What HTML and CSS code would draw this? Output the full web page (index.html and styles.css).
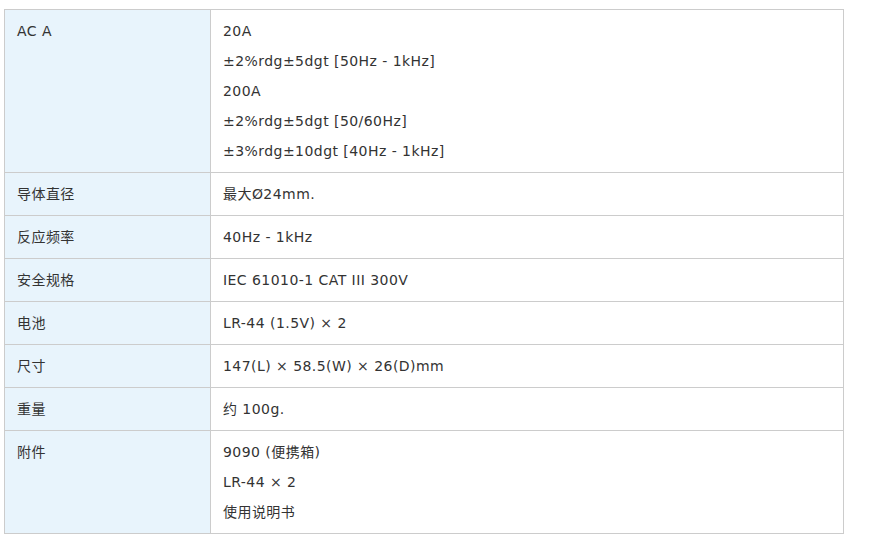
FILE: index.html
```html
<!DOCTYPE html>
<html lang="zh">
<head>
<meta charset="utf-8">
<link rel="stylesheet" href="styles.css">
</head>
<body>
<table class="spec">
  <tr><th>AC A</th><td><p>20A</p><p>±2%rdg±5dgt [50Hz - 1kHz]</p><p>200A</p><p>±2%rdg±5dgt [50/60Hz]</p><p>±3%rdg±10dgt [40Hz - 1kHz]</p></td></tr>
  <tr><th>导体直径</th><td><p>最大Ø24mm.</p></td></tr>
  <tr><th>反应频率</th><td><p>40Hz - 1kHz</p></td></tr>
  <tr><th>安全规格</th><td><p>IEC 61010-1 CAT III 300V</p></td></tr>
  <tr><th>电池</th><td><p>LR-44 (1.5V) × 2</p></td></tr>
  <tr><th>尺寸</th><td><p>147(L) × 58.5(W) × 26(D)mm</p></td></tr>
  <tr><th>重量</th><td><p>约 100g.</p></td></tr>
  <tr><th>附件</th><td><p>9090 (便携箱)</p><p>LR-44 × 2</p><p>使用说明书</p></td></tr>
</table>
</body>
</html>
```
FILE: styles.css
```css
html, body { margin: 0; background: #fff; }
body {
  padding: 9px 0 0 4px;
  font-family: "DejaVu Sans", "Noto Sans CJK SC", sans-serif;
  font-size: 14px;
  letter-spacing: 0.45px;
  color: #333;
}
.spec {
  width: 840px;
  border-collapse: collapse;
  border: 1px solid #ccc;
}
.spec th, .spec td {
  border: 1px solid #ccc;
  padding: 12px 12px;
  text-align: left;
  vertical-align: top;
  line-height: 18px;
  font-weight: normal;
}
.spec th {
  width: 181px;
  background: #e8f4fc;
}
.spec p { margin: 0; }
.spec p + p { margin-top: 12px; }
```
